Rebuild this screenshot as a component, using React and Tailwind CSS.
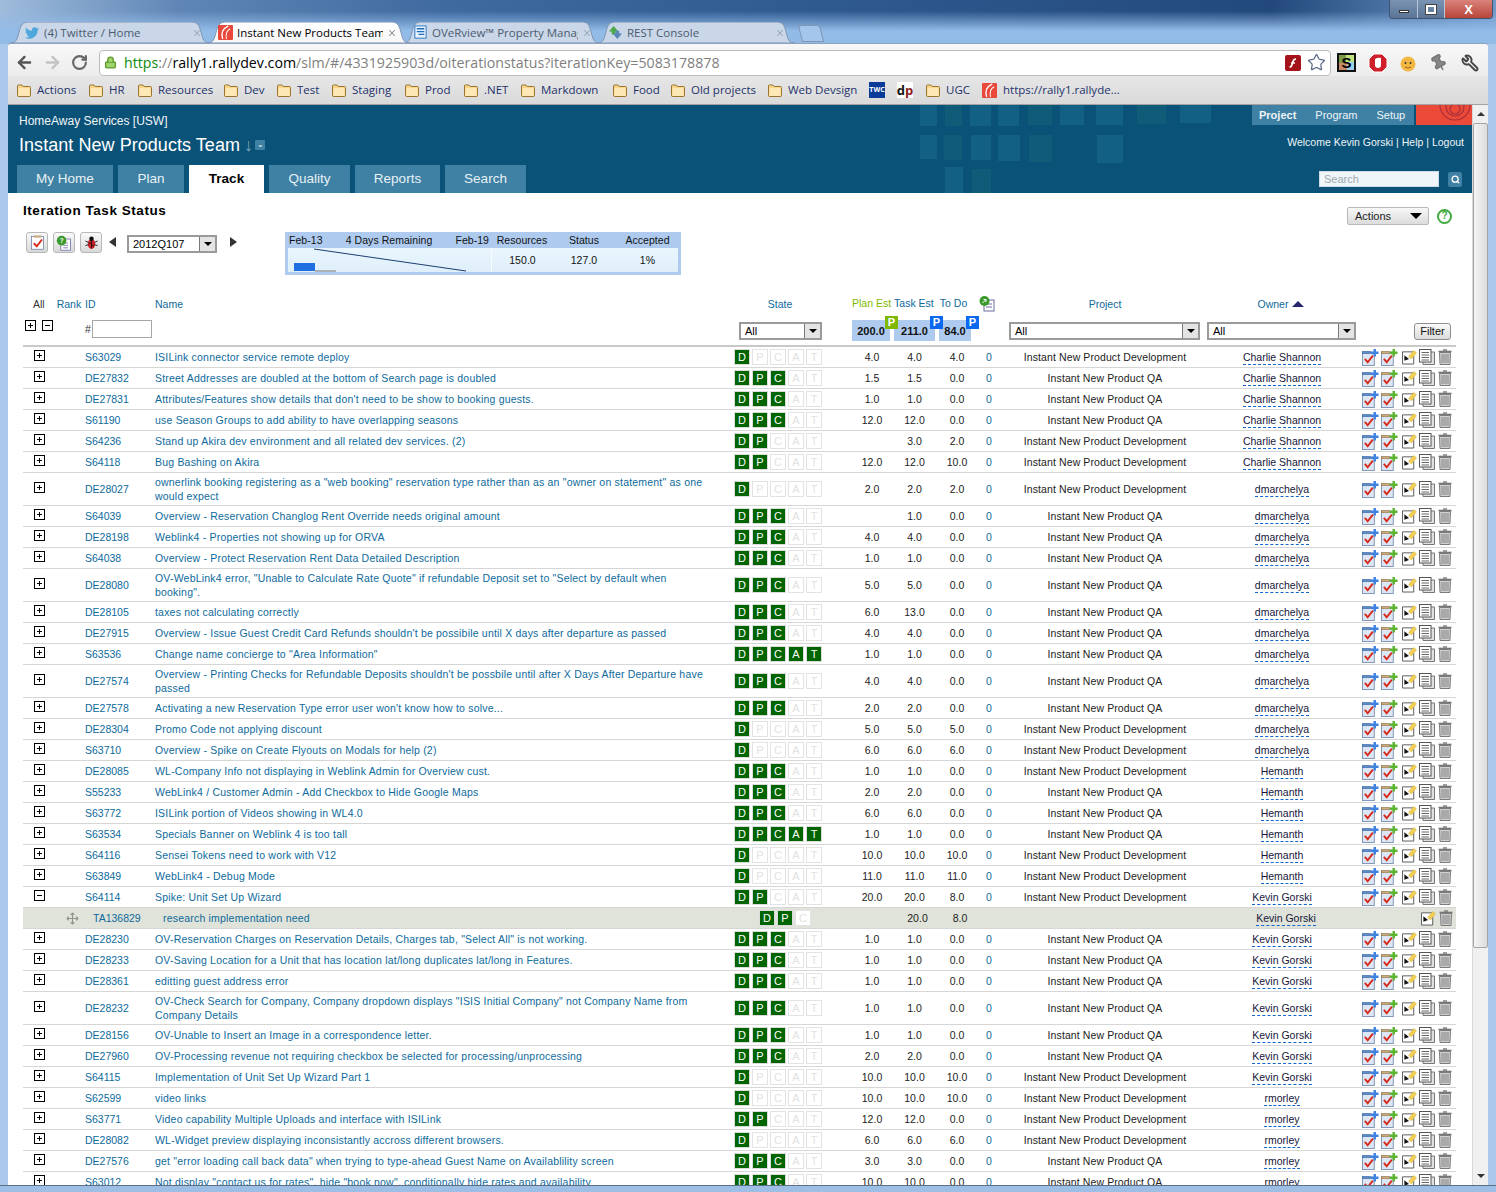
import React from "react";
import { FaTwitter } from "react-icons/fa";
import { ArrowLeft, ArrowRight, RotateCw, Star, Wrench, Pin, Search, X, Lock } from "lucide-react";

const COLS = "grid grid-cols-[62px_70px_580px_116px_42px_43px_42px_22px_210px_144px_102px] items-center";
const DEV = "Instant New Product Development";
const QA = "Instant New Product QA";
const CS = "Charlie Shannon", DM = "dmarchelya", HE = "Hemanth", KG = "Kevin Gorski", RM = "rmorley";

const ROWS = [
  ["S63029", "ISILink connector service remote deploy", 1, "4.0", "4.0", "4.0", DEV, CS],
  ["DE27832", "Street Addresses are doubled at the bottom of Search page is doubled", 3, "1.5", "1.5", "0.0", QA, CS],
  ["DE27831", "Attributes/Features show details that don't need to be show to booking guests.", 3, "1.0", "1.0", "0.0", QA, CS],
  ["S61190", "use Season Groups to add ability to have overlapping seasons", 3, "12.0", "12.0", "0.0", QA, CS],
  ["S64236", "Stand up Akira dev environment and all related dev services. (2)", 2, "", "3.0", "2.0", DEV, CS],
  ["S64118", "Bug Bashing on Akira", 2, "12.0", "12.0", "10.0", DEV, CS],
  ["DE28027", "ownerlink booking registering as a \"web booking\" reservation type rather than as an \"owner on statement\" as one\nwould expect", 1, "2.0", "2.0", "2.0", DEV, DM],
  ["S64039", "Overview - Reservation Changlog Rent Override needs original amount", 3, "", "1.0", "0.0", QA, DM],
  ["DE28198", "Weblink4 - Properties not showing up for ORVA", 3, "4.0", "4.0", "0.0", QA, DM],
  ["S64038", "Overview - Protect Reservation Rent Data Detailed Description", 3, "1.0", "1.0", "0.0", QA, DM],
  ["DE28080", "OV-WebLink4 error, \"Unable to Calculate Rate Quote\" if refundable Deposit set to \"Select by default when\nbooking\".", 3, "5.0", "5.0", "0.0", QA, DM],
  ["DE28105", "taxes not calculating correctly", 3, "6.0", "13.0", "0.0", QA, DM],
  ["DE27915", "Overview - Issue Guest Credit Card Refunds shouldn't be possibile until X days after departure as passed", 3, "4.0", "4.0", "0.0", QA, DM],
  ["S63536", "Change name concierge to \"Area Information\"", 5, "1.0", "1.0", "0.0", QA, DM],
  ["DE27574", "Overview - Printing Checks for Refundable Deposits shouldn't be possbile until after X Days After Departure have\npassed", 3, "4.0", "4.0", "0.0", QA, DM],
  ["DE27578", "Activating a new Reservation Type error user won't know how to solve...", 3, "2.0", "2.0", "0.0", QA, DM],
  ["DE28304", "Promo Code not applying discount", 1, "5.0", "5.0", "5.0", DEV, DM],
  ["S63710", "Overview - Spike on Create Flyouts on Modals for help (2)", 1, "6.0", "6.0", "6.0", DEV, DM],
  ["DE28085", "WL-Company Info not displaying in Weblink Admin for Overview cust.", 3, "1.0", "1.0", "0.0", DEV, HE],
  ["S55233", "WebLink4 / Customer Admin - Add Checkbox to Hide Google Maps", 3, "2.0", "2.0", "0.0", QA, HE],
  ["S63772", "ISILink portion of Videos showing in WL4.0", 3, "6.0", "6.0", "0.0", QA, HE],
  ["S63534", "Specials Banner on Weblink 4 is too tall", 5, "1.0", "1.0", "0.0", QA, HE],
  ["S64116", "Sensei Tokens need to work with V12", 1, "10.0", "10.0", "10.0", DEV, HE],
  ["S63849", "WebLink4 - Debug Mode", 1, "11.0", "11.0", "11.0", DEV, HE],
  ["S64114", "Spike: Unit Set Up Wizard", 2, "20.0", "20.0", "8.0", DEV, KG, "open"],
  ["TASK"],
  ["DE28230", "OV-Reservation Charges on Reservation Details, Charges tab, \"Select All\" is not working.", 3, "1.0", "1.0", "0.0", QA, KG],
  ["DE28233", "OV-Saving Location for a Unit that has location lat/long duplicates lat/long in Features.", 3, "1.0", "1.0", "0.0", QA, KG],
  ["DE28361", "editting guest address error", 3, "1.0", "1.0", "0.0", QA, KG],
  ["DE28232", "OV-Check Search for Company, Company dropdown displays \"ISIS Initial Company\" not Company Name from\nCompany Details", 3, "1.0", "1.0", "0.0", QA, KG],
  ["DE28156", "OV-Unable to Insert an Image in a correspondence letter.", 3, "1.0", "1.0", "0.0", QA, KG],
  ["DE27960", "OV-Processing revenue not requiring checkbox be selected for processing/unprocessing", 3, "2.0", "2.0", "0.0", QA, KG],
  ["S64115", "Implementation of Unit Set Up Wizard Part 1", 1, "10.0", "10.0", "10.0", DEV, KG],
  ["S62599", "video links", 1, "10.0", "10.0", "10.0", DEV, RM],
  ["S63771", "Video capability Multiple Uploads and interface with ISILink", 2, "12.0", "12.0", "0.0", DEV, RM],
  ["DE28082", "WL-Widget preview displaying inconsistantly accross different browsers.", 1, "6.0", "6.0", "6.0", DEV, RM],
  ["DE27576", "get \"error loading call back data\" when trying to type-ahead Guest Name on Availablility screen", 3, "3.0", "3.0", "0.0", QA, RM],
  ["S63012", "Not display \"contact us for rates\", hide \"book now\", conditionally hide rates and availability", 3, "10.0", "10.0", "0.0", QA, RM],
];

const BOOKMARKS = [
  ["Actions", "w-[72px]"], ["HR", "w-[49px]"], ["Resources", "w-[86px]"], ["Dev", "w-[53px]"], ["Test", "w-[55px]"],
  ["Staging", "w-[73px]"], ["Prod", "w-[59px]"], [".NET", "w-[57px]"], ["Markdown", "w-[92px]"], ["Food", "w-[58px]"],
  ["Old projects", "w-[97px]"], ["Web Devsign", "w-[102px]"],
];

const NAV = [
  ["My Home", "w-[96px]"], ["Plan", "w-[66px]"], ["Track", "w-[75px]"], ["Quality", "w-[81px]"], ["Reports", "w-[85px]"], ["Search", "w-[81px]"],
];

function TabShape({ active }) {
  return (
    <svg className="absolute inset-0 w-full h-full" viewBox="0 0 200 21" preserveAspectRatio="none">
      <defs>
        <linearGradient id="tabA" x1="0" y1="0" x2="0" y2="1"><stop offset="0" stopColor="#ffffff" /><stop offset="1" stopColor="#f6f6f6" /></linearGradient>
      </defs>
      <path d="M0 21 C6 21 7 18 9 10 C11 2 13 0 19 0 H181 C187 0 189 2 191 10 C193 18 194 21 200 21 Z" fill={active ? "url(#tabA)" : "#c9d7e9"} stroke="#7e95b3" strokeWidth="1" vectorEffect="non-scaling-stroke" />
    </svg>
  );
}

function RallyLogo({ className = "w-[15px] h-[15px]" }) {
  return (
    <svg viewBox="0 0 16 16" className={className}>
      <rect width="16" height="16" rx="1" fill="#e8493a" />
      <path d="M11 1 C5 4 3 9 5 15" stroke="#fff" strokeWidth="1.4" fill="none" />
      <path d="M13 4 C9 6 8 10 9 15" stroke="#fff" strokeWidth="1.1" fill="none" />
    </svg>
  );
}

function Tab({ active, icon, label, className, inner }) {
  return (
    <div className={"relative h-[21px] flex items-center shrink-0 " + className + (active ? " z-10" : "")}>
      <TabShape active={active} />
      <div className={"relative flex items-center w-full gap-[4px] " + inner}>
        <span className="w-[16px] h-[16px] flex items-center justify-center shrink-0">{icon}</span>
        <span className={"flex-1 overflow-hidden whitespace-nowrap text-[11.5px] leading-[16px] " + (active ? "text-black" : "text-[#4d5b6d]")}>{label}</span>
        <X size={10} strokeWidth={2.5} className={"shrink-0 " + (active ? "text-[#8a8a8a]" : "text-[#9aa6b4]")} />
      </div>
    </div>
  );
}

function Folder() {
  return (
    <svg viewBox="0 0 16 15" className="w-[16px] h-[15px] shrink-0">
      <path d="M1.5 3 a1 1 0 0 1 1-1 h3.5 l1.2 1.5 h6.3 a1 1 0 0 1 1 1 v8 a1 1 0 0 1-1 1 h-11 a1 1 0 0 1-1-1 z" fill="#f9d68a" stroke="#9a7430" strokeWidth="1" />
      <rect x="2.5" y="5" width="11" height="8" fill="#fde7b4" />
    </svg>
  );
}

function Badge({ ch, on }) {
  return (
    <span className={"w-[16px] h-[16px] border flex items-center justify-center text-[11px] leading-none shrink-0 " +
      (on ? "bg-[#006400] border-[#dcdcdc] text-white" : "bg-white border-[#e3e3e3] text-[#e2e2e2]")}>{ch}</span>
  );
}

function StateBadges({ n, letters = "DPCAT" }) {
  return (
    <div className="flex gap-[2px] -ml-[1px]">
      {letters.split("").map((c, i) => <Badge key={c} ch={c} on={i < n} />)}
    </div>
  );
}

function ExpandBox({ minus, className = "" }) {
  return (
    <span className={"w-[11px] h-[11px] border border-black bg-white relative block shrink-0 " + className}>
      <span className="absolute left-[2px] top-[4px] w-[5px] h-[1px] bg-black" />
      {!minus && <span className="absolute left-[4px] top-[2px] w-[1px] h-[5px] bg-black" />}
    </span>
  );
}

function SelectBox({ value, className = "" }) {
  return (
    <div className={"h-[18px] border-2 border-[#9a9a9a] bg-white flex items-center justify-between " + className}>
      <span className="pl-[4px] text-[11px] text-black leading-none">{value}</span>
      <span className="w-[16px] h-full bg-[#e4e4e4] border-l border-[#7a7a7a] flex items-center justify-center">
        <span className="w-0 h-0 border-l-[4px] border-r-[4px] border-t-[4px] border-l-transparent border-r-transparent border-t-black" />
      </span>
    </div>
  );
}

function AddTaskIcon({ color, clip }) {
  return (
    <svg viewBox="0 0 18 18" className="w-[17px] h-[17px] shrink-0">
      <rect x="0.5" y="3.5" width="12.5" height="14" fill="#dde6f3" stroke="#7d93b5" />
      <rect x="0.5" y="2.5" width="8.5" height="2.5" fill={clip} stroke={clip === "#c9ad80" ? "#927349" : "#3d6aa6"} strokeWidth="0.6" />
      <path d="M3 10.5 L6 14 L11.5 7" stroke="#d62a1c" strokeWidth="2" fill="none" />
      <path d="M13.5 0 v8 M9.5 4 h8" stroke={color} strokeWidth="2.6" />
    </svg>
  );
}

function EditIcon() {
  return (
    <svg viewBox="0 0 16 16" className="w-[15px] h-[16px] shrink-0">
      <path d="M0.5 2.5 H12.5 V15.5 H0.5 Z" fill="#fff" stroke="#555" />
      <path d="M2.5 6 L7.5 10 L2.5 12 Z" fill="#111" />
      <path d="M7 7.5 L12.5 1 L15.5 3.5 L10 10 Z" fill="#f2cf53" stroke="#c9ab42" strokeWidth="0.5" />
    </svg>
  );
}

function CopyIcon() {
  return (
    <svg viewBox="0 0 16 16" className="w-[16px] h-[16px] shrink-0">
      <path d="M4 3 H15.5 V15.5 H4 Z" fill="#e0e0e0" stroke="#777" />
      <rect x="0.5" y="0.5" width="11.5" height="12.5" fill="#fff" stroke="#555" />
      <path d="M2.5 3.5 h7.5 M2.5 6 h7.5 M2.5 8.5 h7.5 M2.5 11 h7.5" stroke="#666" strokeWidth="1" />
    </svg>
  );
}

function TrashIcon() {
  return (
    <svg viewBox="0 0 14 16" className="w-[14px] h-[16px] shrink-0">
      <path d="M0.5 2.5 H13.5" stroke="#777" strokeWidth="1.6" />
      <path d="M5 1 H9" stroke="#777" strokeWidth="1.4" />
      <path d="M1.5 3.5 H12.5 L12 15.5 H2 Z" fill="#d0d0d0" stroke="#7b7b7b" />
      <path d="M4 5 V14 M6 5 V14 M8 5 V14 M10 5 V14" stroke="#7b7b7b" strokeWidth="0.9" />
    </svg>
  );
}

function Owner({ name }) {
  return <span className="border-b border-dashed border-[#1366cc] text-[#16163a] leading-[13px] pb-[1px]">{name}</span>;
}

function Row({ r }) {
  const [id, name, n, plan, task, todo, project, owner, open] = r;
  const tall = name.includes("\n");
  return (
    <div className={COLS + " border-b border-[#d6d6d6] text-center " + (tall ? "h-[33px]" : "h-[21px]")}>
      <div className="flex pl-[11px] -mt-[3px]"><ExpandBox minus={open === "open"} /></div>
      <div className="text-left text-[#0e6a9c]">{id}</div>
      <div className="text-left text-[#0e6a9c] whitespace-pre-line leading-[14px] -mt-[1px] tracking-[0.2px]">{name}</div>
      <div><StateBadges n={n} /></div>
      <div className="text-[#222]">{plan}</div>
      <div className="text-[#222]">{task}</div>
      <div className="text-[#222]">{todo}</div>
      <div className="text-[#0e6a9c]">0</div>
      <div className="text-[#222] tracking-[0.1px]">{project}</div>
      <div><Owner name={owner} /></div>
      <div className="flex items-center pl-[8px]">
        <AddTaskIcon color="#3f82e0" clip="#5f8cc8" />
        <span className="ml-[2px]"><AddTaskIcon color="#5cb531" clip="#c9ad80" /></span>
        <span className="ml-[4px]"><EditIcon /></span>
        <span className="ml-[2px]"><CopyIcon /></span>
        <span className="ml-[3px]"><TrashIcon /></span>
      </div>
    </div>
  );
}

function TaskRow() {
  return (
    <div className={COLS + " h-[21px] bg-[#dfe3d9] border-b border-[#d6d6d6] text-center"}>
      <div className="flex pl-[43px]">
        <svg viewBox="0 0 14 14" className="w-[13px] h-[13px]"><path d="M7 1 v12 M1 7 h12 M7 1 l-2 2 M7 1 l2 2 M7 13 l-2-2 M7 13 l2-2 M1 7 l2-2 M1 7 l2 2 M13 7 l-2-2 M13 7 l-2 2" stroke="#8f938c" strokeWidth="1.2" fill="none" /></svg>
      </div>
      <div className="text-left pl-[8px] text-[#0e6a9c]">TA136829</div>
      <div className="text-left pl-[8px] text-[#0e6a9c] tracking-[0.2px]">research implementation need</div>
      <div className="pl-[25px]"><StateBadges n={2} letters="DPC" /></div>
      <div />
      <div className="pl-[6px] text-[#222]">20.0</div>
      <div className="pl-[6px] text-[#222]">8.0</div>
      <div />
      <div />
      <div className="pl-[8px]"><Owner name={KG} /></div>
      <div className="flex items-center pl-[67px]">
        <EditIcon />
        <span className="ml-[3px]"><TrashIcon /></span>
      </div>
    </div>
  );
}

function TotalBox({ value, letter, badge, className }) {
  return (
    <div className={"relative h-[21px] bg-[#aecbef] flex items-center justify-center font-bold text-[11px] text-[#111] " + className}>
      {value}
      <span className={"absolute z-10 -top-[4px] -right-[8px] w-[13px] h-[13px] flex items-center justify-center text-white text-[11px] font-bold leading-none " + badge}>{letter}</span>
    </div>
  );
}

function Watermark() {
  const r = [
    [920,105,17,21],[945,105,17,21],[970,105,21,21],[998,105,21,21],[1028,105,24,20],[1060,105,24,20],[1096,105,27,20],[1137,105,29,19],[1180,105,31,18],
    [920,135,17,24],[944,135,18,25],[971,135,20,25],[998,135,22,26],[1029,135,23,27],[1097,135,26,28],
    [945,167,18,26],[972,169,19,24],
  ];
  return (
    <svg className="absolute left-0 top-0 w-[1464px] h-[88px]" viewBox="8 105 1464 88">
      {r.map(([x, y, w, h], i) => <rect key={i} x={x} y={y} width={w} height={h} fill={i % 3 === 1 ? "#125f78" : "#17668a"} opacity="0.75" />)}
    </svg>
  );
}

export default function App() {
  return (
    <div className="relative w-[1496px] h-[1192px] overflow-hidden flex flex-col font-['Liberation_Sans',Arial,sans-serif] bg-[#a9c8ea]">
      {/* glass frame */}
      <div className="absolute inset-x-0 top-0 h-[44px] bg-[linear-gradient(90deg,#9fbcdc_0%,#5f86b6_12%,#3f6a9f_30%,#2f5a90_55%,#23497c_85%,#6f97c7_100%)]" />
      <div className="absolute inset-x-0 top-0 h-[44px] bg-[linear-gradient(180deg,rgba(147,187,232,0)_25%,rgba(147,187,232,1)_70%)]" />

      {/* window buttons */}
      <div className="relative h-[22px] flex justify-end pr-[3px] shrink-0">
        <div className="h-[19px] flex border border-[#3f5470] border-t-0 rounded-b-[4px] overflow-hidden">
          <div className="w-[28px] bg-[linear-gradient(180deg,#7a93b3,#5a7596)] flex items-center justify-center border-r border-[#b8c7d8]"><span className="w-[10px] h-[3px] mt-[5px] bg-white border border-[#333]" /></div>
          <div className="w-[27px] bg-[linear-gradient(180deg,#7a93b3,#5a7596)] flex items-center justify-center border-r border-[#b8c7d8]"><span className="w-[10px] h-[9px] border-2 border-white outline outline-1 outline-[#444]" /></div>
          <div className="w-[47px] bg-[linear-gradient(180deg,#d9837a,#b8453a)] flex items-center justify-center text-white font-bold text-[13px] leading-none">X</div>
        </div>
      </div>

      {/* tabs */}
      <div className="relative h-[21px] flex pl-[10px] shrink-0 font-['Open_Sans',sans-serif]">
        <Tab className="w-[200px]" inner="pl-[14px] pr-[8px]" icon={<FaTwitter size={14} className="text-[#4fa8dc]" />} label="(4) Twitter / Home" />
        <Tab active className="w-[203px] -ml-[3px]" inner="pl-[10px] pr-[13px]" icon={<RallyLogo />} label="Instant New Products Team" />
        <Tab className="w-[197px] -ml-[7px]" inner="pl-[9px] pr-[8px]" icon={<svg viewBox="0 0 16 16" className="w-[15px] h-[15px]"><rect x="2" y="1" width="12" height="13" fill="#e7f1fb" stroke="#2b78c4" /><path d="M4 4 h8 M4 7 h8 M6 10 h6" stroke="#1f6db8" strokeWidth="1.4" /></svg>} label="OVeRview™ Property Management" />
        <Tab className="w-[198px] -ml-[3px]" inner="pl-[10px] pr-[10px]" icon={<svg viewBox="0 0 16 16" className="w-[15px] h-[15px]"><path d="M6 1 L11 7 H8 V10 H4 V7 H1 Z" fill="#4da84a" /><path d="M10 15 L5 9 H8 V6 H12 V9 H15 Z" fill="#5c86b8" /></svg>} label="REST Console" />
        <div className="w-[22px] h-[17px] mt-[3px] ml-[5px] bg-[#a5c6ec] border border-[#7e95b3] rounded-t-[3px] skew-x-[15deg]" />
      </div>

      {/* browser chrome */}
      <div className="relative mx-[8px] h-[33px] shrink-0 pt-[5px] bg-[linear-gradient(180deg,#f8f8f8,#ececec)] border-t border-[#8ca3bf] flex items-center text-[#555] rounded-t-[3px]">
        <div className="w-[91px] flex items-center pl-[7px] gap-[9px] shrink-0">
          <ArrowLeft size={19} strokeWidth={3} className="text-[#555]" />
          <ArrowRight size={19} strokeWidth={3} className="text-[#c3c3c3]" />
          <RotateCw size={17} strokeWidth={3} className="text-[#666]" />
        </div>
        <div className="w-[1232px] h-[26px] bg-white border border-[#bdbdbd] rounded-[4px] flex items-center shrink-0">
          <Lock size={13} strokeWidth={2.5} className="ml-[4px] mr-[7px] text-[#5e9c2e] fill-[#9fd46a]" />
          <span className="font-['Open_Sans',sans-serif] text-[14.2px] whitespace-nowrap text-[#808080] flex-1"><span className="text-[#0a8a0a]">https</span>://<span className="text-black">rally1.rallydev.com</span>/slm/#/4331925903d/oiterationstatus?iterationKey=5083178878</span>
          <svg viewBox="0 0 16 16" className="w-[16px] h-[16px] mr-[6px]"><rect width="16" height="16" rx="2" fill="#a4131a" /><path d="M11 4 C8 4 8 6 7.5 8 C7 11 6 12 4.5 12 M6 8 H10" stroke="#fff" strokeWidth="1.6" fill="none" /></svg>
          <Star size={19} strokeWidth={1.6} className="text-[#5c6b8a] mr-[4px]" />
        </div>
        <div className="flex items-center flex-1 pl-[6px] gap-[12px]">
          <span className="w-[19px] h-[19px] flex items-center justify-center border-2 border-[#111] text-black font-bold text-[15px] leading-none bg-[conic-gradient(#c3e37f_0_25%,#9fd0ea_0_50%,#c98a6a_0_75%,#7d9a48_0)]">S</span>
          <svg viewBox="0 0 20 20" className="w-[20px] h-[20px]"><path d="M6 1 H14 L19 6 V14 L14 19 H6 L1 14 V6 Z" fill="#cf1f2a" stroke="#fff" strokeWidth="1" /><path d="M7 6 V12 Q7 15 10 15 Q13 15 13 12 V5 Q10 4 7 6" fill="#fff" /></svg>
          <svg viewBox="0 0 18 18" className="w-[18px] h-[18px] ml-[-1px]"><circle cx="9" cy="10" r="7.5" fill="#f1b742" /><circle cx="6.5" cy="9" r="1" fill="#333" /><circle cx="11.5" cy="9" r="1" fill="#333" /><path d="M6 13 Q9 15 12 13" stroke="#a0641a" fill="none" /></svg>
          <Pin size={18} className="text-[#777] fill-[#888] ml-[1px] rotate-[-30deg]" />
          <Wrench size={18} strokeWidth={2.5} className="text-[#444] ml-[1px] -scale-x-100" />
        </div>
      </div>

      {/* bookmarks */}
      <div className="relative mx-[8px] h-[29px] shrink-0 bg-[linear-gradient(180deg,#e6e6e6,#dadada)] border-b border-[#a2a2a2] flex items-center pl-[8px] font-['Open_Sans',sans-serif] text-[11.5px] text-[#23336b]">
        {BOOKMARKS.map(([label, w]) => (
          <div key={label} className={"flex items-center gap-[5px] shrink-0 " + w}><Folder /><span className="whitespace-nowrap">{label}</span></div>
        ))}
        <span className="w-[16px] h-[16px] bg-[#0b3b98] text-white text-[7px] font-bold flex items-center justify-center shrink-0 mr-[12px]">TWC</span>
        <span className="w-[16px] h-[16px] bg-white text-[#111] text-[13px] font-bold flex items-center justify-center leading-none shrink-0 mr-[12px]">d<span className="text-[#8a1c1c]">p</span></span>
        <div className="flex items-center gap-[5px] shrink-0 w-[57px]"><Folder /><span>UGC</span></div>
        <div className="flex items-center gap-[6px] shrink-0"><RallyLogo /><span className="whitespace-nowrap">https://rally1.rallyde...</span></div>
      </div>

      {/* viewport */}
      <div className="relative mx-[8px] flex-1 min-h-0 flex bg-white">
        <div className="w-[1464px] shrink-0 flex flex-col min-h-0">
          {/* app header */}
          <div className="relative h-[88px] bg-[#0a5278] text-white shrink-0 overflow-hidden">
            <Watermark />
            <div className="relative flex h-full">
              <div className="flex-1 flex flex-col pl-[11px]">
                <div className="text-[12px] leading-[14px] pt-[9px] text-[#f0f5f8]">HomeAway Services [USW]</div>
                <div className="flex items-center mt-[5px] h-[24px]">
                  <span className="text-[18px] leading-[22px] tracking-[0.05px]">Instant New Products Team</span>
                  <span className="ml-[4px] text-[#7fa6bc] text-[18px] leading-none">↓</span>
                  <span className="ml-[2px] w-[10px] h-[10px] bg-[#3f81a4] rounded-[1px] flex items-center justify-center text-[8px] leading-none">⌄</span>
                </div>
                <div className="flex gap-[5px] mt-auto -ml-[2px] text-[13.5px]">
                  {NAV.map(([label, w]) => {
                    const on = label === "Track";
                    return <div key={label} className={"h-[28px] flex items-center justify-center shrink-0 " + w + " " + (on ? "bg-white text-black font-bold" : "bg-[#3f81a4] text-[#e8f1f6]")}>{label}</div>;
                  })}
                </div>
              </div>
              <div className="w-[220px] flex flex-col items-end">
                <div className="flex h-[20px]">
                  <div className="w-[162px] bg-[#3f81a4] flex items-center text-[11px] text-[#eef4f7]">
                    <span className="ml-[7px] font-bold">Project</span>
                    <span className="ml-[19px]">Program</span>
                    <span className="ml-[19px]">Setup</span>
                  </div>
                  <div className="ml-[2px] w-[56px] bg-[#ec4a39] overflow-hidden">
                    <svg viewBox="0 0 56 20" className="w-[56px] h-[20px]"><g fill="none" stroke="#a82f3a" strokeWidth="1.2"><circle cx="39" cy="0" r="15" /><circle cx="39" cy="2" r="9" /><circle cx="39" cy="4" r="5" /></g></svg>
                  </div>
                </div>
                <div className="text-[10.5px] leading-[14px] mt-[10px] pr-[8px] text-[#eef4f7] whitespace-nowrap">Welcome Kevin Gorski | Help | Logout</div>
                <div className="flex items-center mt-[22px] pr-[10px]">
                  <div className="w-[120px] h-[16px] bg-[#eef6fa] border border-[#cfdbe2] text-[11px] leading-[14px] pl-[4px] text-[#a3a9ad]">Search</div>
                  <div className="ml-[9px] w-[14px] h-[15px] bg-[#3f81a4] rounded-[2px] flex items-center justify-center"><Search size={9} strokeWidth={3.5} className="text-white" /></div>
                </div>
              </div>
            </div>
          </div>

          {/* page */}
          <div className="flex-1 min-h-0 overflow-hidden pl-[15px] pr-[16px] text-[10.5px] leading-[14px]">
            <div className="h-[39px] flex items-start justify-between">
              <h1 className="mt-[10px] text-[13.5px] leading-[16px] font-bold text-black tracking-[0.55px]">Iteration Task Status</h1>
              <div className="flex items-center mt-[14px] mr-[4px]">
                <div className="w-[82px] h-[18px] border border-[#b8b8b8] bg-[linear-gradient(180deg,#f8f8f8,#dcdcdc)] rounded-[2px] flex items-center justify-between pr-[6px] pl-[7px] text-[11px] text-[#222]">
                  Actions
                  <span className="w-0 h-0 border-l-[6px] border-r-[6px] border-t-[6px] border-l-transparent border-r-transparent border-t-black" />
                </div>
                <span className="ml-[8px] w-[15px] h-[15px] rounded-full border-2 border-[#3faa3f] text-[#3faa3f] text-[10px] font-bold flex items-center justify-center leading-none">?</span>
              </div>
            </div>

            <div className="h-[64px] flex items-start">
              <div className="flex items-center ml-[3px] gap-[5px]">
                {[
                  <svg key="a" viewBox="0 0 20 20" className="w-[15px] h-[17px]"><rect x="2" y="2" width="16" height="17" fill="#fff" stroke="#6a7fa3" /><rect x="5" y="0.5" width="10" height="3" fill="#c9ad80" /><path d="M5 11 L9 15 L16 6" stroke="#d62a1c" strokeWidth="2.5" fill="none" /></svg>,
                  <svg key="b" viewBox="0 0 20 20" className="w-[16px] h-[16px]"><rect x="6" y="5" width="12" height="14" fill="#fff" stroke="#6a6fa3" /><path d="M9 10 h6 M9 13 h6 M9 16 h6" stroke="#6a6fa3" /><circle cx="7" cy="7" r="6" fill="#3b9a2c" /><text x="7" y="10" fontSize="8" textAnchor="middle" fill="#fff" fontWeight="bold">?</text></svg>,
                  <svg key="c" viewBox="0 0 20 20" className="w-[15px] h-[15px]"><ellipse cx="10" cy="12" rx="5" ry="6.5" fill="#d1212a" /><circle cx="10" cy="5" r="3" fill="#111" /><path d="M10 6 V18 M2 8 L6 10 M18 8 L14 10 M2 14 L6 13 M18 14 L14 13" stroke="#111" strokeWidth="1.2" /><circle cx="8" cy="11" r="1" fill="#111" /><circle cx="12" cy="14" r="1" fill="#111" /></svg>,
                ].map((ic, i) => (
                  <span key={i} className="w-[22px] h-[21px] rounded-[3px] bg-[linear-gradient(180deg,#fafafa,#d8d8d8)] border border-[#b8b8b8] flex items-center justify-center">{ic}</span>
                ))}
              </div>
              <span className="ml-[7px] mt-[5px] w-0 h-0 border-y-[5px] border-r-[7px] border-y-transparent border-r-[#333]" />
              <SelectBox value="2012Q107" className="w-[90px] ml-[11px] mt-[3px]" />
              <span className="ml-[13px] mt-[5px] w-0 h-0 border-y-[5px] border-l-[7px] border-y-transparent border-l-[#333]" />
              <div className="ml-[48px] w-[396px] h-[43px] bg-[#aecbef] px-[3px] flex flex-col text-[#111] tracking-[0.05px]">
                <div className="grid grid-cols-[203px_62px_62px_65px] h-[16px] items-center">
                  <div className="flex justify-between pr-[2px] pl-[1px]"><span>Feb-13</span><span>4 Days Remaining</span><span>Feb-19</span></div>
                  <div className="text-center">Resources</div>
                  <div className="text-center">Status</div>
                  <div className="text-center">Accepted</div>
                </div>
                <div className="grid grid-cols-[203px_62px_62px_65px] h-[24px] bg-[linear-gradient(180deg,#e9f6fe,#dfeef9)] items-center">
                  <svg viewBox="0 0 200 24" className="w-[200px] h-[24px]"><path d="M26 1 L178 23" stroke="#1a3f70" strokeWidth="1" /><rect x="6" y="15" width="21" height="8" fill="#1f6fe0" /><path d="M27 23 H48" stroke="#777" /></svg>
                  <div className="text-center border-l border-[#f7fcff] h-full flex items-center justify-center">150.0</div>
                  <div className="text-center">127.0</div>
                  <div className="text-center">1%</div>
                </div>
              </div>
            </div>

            {/* column labels */}
            <div className={COLS + " h-[13px] text-[#0e6a9c] text-center"}>
              <div className="flex text-left"><span className="ml-[10px] text-[#333]">All</span><span className="ml-[12px]">Rank</span></div>
              <div className="text-left">ID</div>
              <div className="text-left">Name</div>
              <div className="pr-[26px]">State</div>
              <div className="col-span-4 flex pl-[1px] whitespace-nowrap">
                <span className="text-[#7fb800]">Plan Est</span>
                <span className="ml-[3px]">Task Est</span>
                <span className="ml-[6px]">To Do</span>
                <svg viewBox="0 0 16 16" className="w-[16px] h-[16px] ml-[12px]"><rect x="5" y="4" width="10" height="11" fill="#fff" stroke="#6a6fa3" /><path d="M7 8 h6 M7 11 h6" stroke="#6a6fa3" /><circle cx="5.5" cy="5" r="5" fill="#3b9a2c" /><path d="M3.5 7 L7 3.5 M4.5 3.5 H7 V6" stroke="#fff" strokeWidth="1" fill="none" /></svg>
              </div>
              <div>Project</div>
              <div className="flex items-center justify-center pr-[2px]"><span>Owner</span><span className="ml-[4px] w-0 h-0 border-x-[6px] border-b-[6px] border-x-transparent border-b-[#26266e]" /></div>
              <div />
            </div>

            {/* filters */}
            <div className={COLS + " h-[36px] text-center"}>
              <div className="flex gap-[6px] pl-[2px] self-start mt-[11px]"><ExpandBox /><ExpandBox minus /></div>
              <div className="col-span-2 flex items-center text-left self-start mt-[11px]"><span className="text-[#333] w-[7px]">#</span><span className="w-[60px] h-[18px] border border-[#a6a6a6] bg-white" /></div>
              <div className="pl-[4px] self-start mt-[13px]"><SelectBox value="All" className="w-[83px]" /></div>
              <div className="col-span-4 flex pl-[1px] gap-[4px] self-start mt-[11px]">
                <TotalBox value="200.0" letter="P" badge="bg-[#7fb800]" className="w-[38px]" />
                <TotalBox value="211.0" letter="P" badge="bg-[#0a69f0]" className="w-[41px]" />
                <TotalBox value="84.0" letter="P" badge="bg-[#0a69f0]" className="w-[32px]" />
              </div>
              <div className="pl-[9px] self-start mt-[13px]"><SelectBox value="All" className="w-[191px]" /></div>
              <div className="self-start mt-[13px]"><SelectBox value="All" className="w-[149px] -ml-[3px]" /></div>
              <div className="flex justify-end pr-[5px] self-start mt-[14px]">
                <span className="w-[37px] h-[17px] border border-[#8f8f8f] rounded-[3px] bg-[linear-gradient(180deg,#fafafa,#dcdcdc)] text-[11px] leading-[15px] text-[#111]">Filter</span>
              </div>
            </div>
            <div className="h-[2px] bg-[#c9c9c9]" />

            {ROWS.map((r) => r[0] === "TASK" ? <TaskRow key="task" /> : <Row key={r[0]} r={r} />)}
          </div>
        </div>

        {/* scrollbar */}
        <div className="w-[16px] shrink-0 bg-[#f0f0f0] border-l border-[#d8d8d8] flex flex-col items-center">
          <div className="h-[18px] flex items-center justify-center"><span className="w-0 h-0 border-x-[4px] border-b-[4px] border-x-transparent border-b-[#333]" /></div>
          <div className="w-[15px] h-[825px] bg-[linear-gradient(90deg,#f4f4f4,#dcdcdc)] border border-[#a5a5a5] rounded-[2px]" />
          <div className="mt-auto h-[18px] flex items-center justify-center"><span className="w-0 h-0 border-x-[4px] border-t-[4px] border-x-transparent border-t-[#333]" /></div>
        </div>
      </div>

      {/* bottom frame */}
      <div className="h-[7px] shrink-0 bg-[#9dbfe6] border-t border-[#5c6f85]" />
    </div>
  );
}
